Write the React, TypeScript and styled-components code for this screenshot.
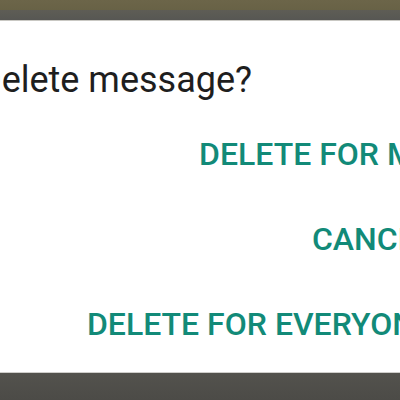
import React from "react";
import styled, { createGlobalStyle } from "styled-components";

const Global = createGlobalStyle`
  html, body { margin: 0; padding: 0; }
  body {
    width: 400px;
    height: 400px;
    overflow: hidden;
    background: #4f4e4a;
    font-family: Roboto, "Noto Sans", "Liberation Sans", sans-serif;
  }
`;

const Screen = styled.div`
  width: 400px;
  height: 400px;
  display: flex;
  flex-direction: column;
  overflow: hidden;
  background: #4f4e4a;
`;

const TopBar = styled.div`
  height: 10px;
  flex-shrink: 0;
  background: linear-gradient(#6c6549, #686246);
`;

const StatusShade = styled.div`
  height: 10px;
  flex-shrink: 0;
  background: linear-gradient(#5e5d55, #575753);
  border-bottom: 1px solid #c9c8c3;
`;

const Dialog = styled.div`
  margin-left: -23px;
  width: 456px;
  height: 352px;
  flex-shrink: 0;
  background: #ffffff;
  display: flex;
  flex-direction: column;
  box-sizing: border-box;
  padding-top: 38px;
  border-bottom: 1px solid #cfcecb;
`;

const Title = styled.div`
  font-size: 36px;
  line-height: 43px;
  color: #1e1e1e;
  font-weight: 400;
  padding-left: 1px;
  white-space: nowrap;
`;

const Actions = styled.div`
  display: flex;
  flex-direction: column;
  align-items: flex-end;
  margin-top: 10px;
`;

const ActionButton = styled.button`
  border: none;
  background: none;
  padding: 0;
  height: 85px;
  font-family: Roboto, "Noto Sans", "Liberation Sans", sans-serif;
  font-size: 32px;
  font-weight: 500;
  color: #128a78;
  white-space: nowrap;
  cursor: pointer;
  line-height: 85px;
`;

const Floor = styled.div`
  flex: 1;
  background: linear-gradient(#53524d, #4c4b47);
`;

export default function App() {
  return (
    <>
      <Global />
      <Screen>
        <TopBar />
        <StatusShade />
        <Dialog>
          <Title>Delete message?</Title>
          <Actions>
            <ActionButton>DELETE FOR ME</ActionButton>
            <ActionButton>CANCEL</ActionButton>
            <ActionButton>DELETE FOR EVERYONE</ActionButton>
          </Actions>
        </Dialog>
        <Floor />
      </Screen>
    </>
  );
}
